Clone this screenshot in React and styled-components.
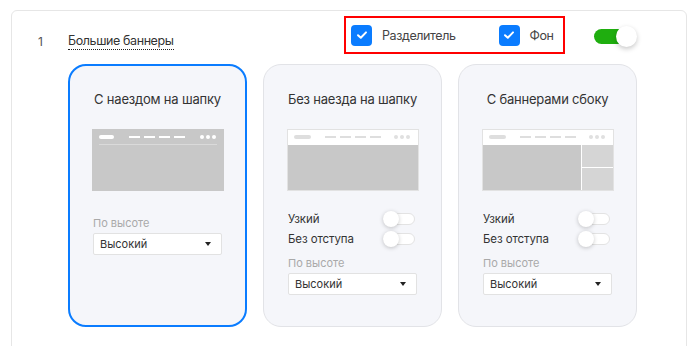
import React from "react";
import styled, { createGlobalStyle } from "styled-components";

const Global = createGlobalStyle`
  html, body { margin: 0; padding: 0; background: #fff; }
  body { font-family: Inter, "Noto Sans", sans-serif; color: #333; overflow: hidden; }
  * { box-sizing: border-box; }
`;

const Panel = styled.div`
  margin: 10px 0 0 11px;
  width: 676px;
  height: 360px;
  border: 1px solid #e6e6e6;
  border-radius: 6px;
  padding: 4px 49px 0 25px;
`;

const Header = styled.div`
  display: flex;
  align-items: flex-start;
  height: 39px;
`;

const Num = styled.div`
  width: 31px;
  font-size: 12px;
  line-height: 16px;
  margin-top: 19px;
  color: #555;
  padding-left: 1px;
`;

const Title = styled.div`
  font-size: 12.5px;
  letter-spacing: -0.4px;
  line-height: 16px;
  margin-top: 18px;
  color: #333;
  border-bottom: 1px dotted #222;
`;

const Highlight = styled.div`
  margin-left: auto;
  margin-top: 1px;
  width: 221px;
  height: 38px;
  border: 2px solid #f00;
  display: flex;
  align-items: center;
  padding-left: 5px;
`;

const CheckItem = styled.label`
  display: flex;
  align-items: center;
  gap: 10px;
  font-size: 12.5px;
  letter-spacing: -0.4px;
  color: #444;
  margin-right: ${(p) => p.$mr || 0}px;
`;

const Box = styled.span`
  width: 21px;
  height: 21px;
  border-radius: 4px;
  background: #0a7cff;
  display: flex;
  align-items: center;
  justify-content: center;
`;

const BigToggle = styled.div`
  position: relative;
  margin-left: 29px;
  margin-top: 11px;
  width: 43px;
  height: 21px;
`;

const BigTrack = styled.div`
  position: absolute;
  left: 0;
  top: 3px;
  width: 38px;
  height: 15px;
  border-radius: 8px;
  background: #1fae0f;
`;

const BigKnob = styled.div`
  position: absolute;
  right: 0;
  top: 0;
  width: 21px;
  height: 21px;
  border-radius: 50%;
  background: #fff;
  box-shadow: 0 2px 5px rgba(0, 0, 0, 0.22);
`;

const Cards = styled.div`
  display: flex;
  gap: 16px;
  margin-top: 10px;
  margin-left: 31px;
`;

const Card = styled.div`
  width: 179px;
  height: 263px;
  border-radius: 18px;
  background: #f5f6fa;
  border: ${(p) => (p.$active ? "2px solid #0a7cff" : "1px solid #e2e3e7")};
  padding: ${(p) => (p.$active ? "24px 22px 0 22px" : "25px 23px 0 23px")};
  display: flex;
  flex-direction: column;
`;

const CardTitle = styled.div`
  text-align: center;
  font-size: 13px;
  letter-spacing: -0.2px;
  line-height: 18px;
  color: #333;
  height: 18px;
  white-space: nowrap;
`;

const Preview = styled.div`
  margin-top: 21px;
  width: 132px;
  height: 62px;
  background: #c8c8c8;
  border: ${(p) => (p.$framed ? "1px solid #e2e2e2" : "none")};
  display: flex;
  flex-direction: column;
`;

const PHeader = styled.div`
  height: ${(p) => (p.$white ? 15 : 16)}px;
  flex-shrink: 0;
  background: ${(p) => (p.$white ? "#fff" : "transparent")};
  border-bottom: 1px solid ${(p) => (p.$white ? "#fff" : "#dadada")};
  margin: ${(p) => (p.$white ? "0" : "0 7px")};
  padding: ${(p) => (p.$white ? "0 8px 0 6px" : "0 1px 0 0")};
  display: flex;
  align-items: center;
`;

const Pill = styled.span`
  width: ${(p) => (p.$white ? 17 : 15)}px;
  height: 4px;
  border-radius: 2px;
  background: ${(p) => (p.$white ? "#dedede" : "#fff")};
`;

const Dashes = styled.span`
  display: flex;
  gap: 4px;
  margin-left: ${(p) => (p.$white ? 14 : 15)}px;
`;

const Dash = styled.span`
  width: 11px;
  height: 2px;
  background: ${(p) => (p.$white ? "#dedede" : "#fff")};
`;

const Dots = styled.span`
  display: flex;
  gap: 2px;
  margin-left: auto;
`;

const Dot = styled.span`
  width: 4px;
  height: 4px;
  border-radius: 50%;
  background: ${(p) => (p.$white ? "#e0e0e0" : "#fff")};
`;

const PBody = styled.div`
  flex: 1;
  display: flex;
`;

const PMain = styled.div`
  flex: 1;
  background: #c8c8c8;
`;

const PSide = styled.div`
  width: 32px;
  border-left: 1px solid #fff;
  display: flex;
  flex-direction: column;
`;

const PSideCell = styled.div`
  flex: 1;
  background: #d5d5d5;
  & + & {
    border-top: 1px solid #fff;
  }
`;

const Options = styled.div`
  margin-top: 18px;
  display: flex;
  flex-direction: column;
`;

const OptRow = styled.div`
  height: 20px;
  display: flex;
  align-items: center;
  justify-content: space-between;
  padding-left: 1px;
  padding-right: 3px;
  font-size: 11.5px;
  letter-spacing: -0.1px;
  color: #333;
`;

const SmallToggle = styled.span`
  position: relative;
  width: 32px;
  height: 12px;
  border-radius: 6px;
  background: #fff;
  border: 1px solid #e3e3e3;
`;

const SmallKnob = styled.span`
  position: absolute;
  left: -1px;
  top: -3px;
  width: 16px;
  height: 16px;
  border-radius: 50%;
  background: #fff;
  box-shadow: 0 1px 4px rgba(0, 0, 0, 0.22);
`;

const FieldLabel = styled.div`
  margin-top: 7px;
  height: 14px;
  line-height: 14px;
  font-size: 11px;
  color: #a9a9a9;
  padding-left: 1px;
`;

const Select = styled.div`
  margin: 3px 0 0 1px;
  width: 129px;
  height: 22px;
  background: #fff;
  border: 1px solid #e2e2e2;
  border-radius: 2px;
  display: flex;
  align-items: center;
  justify-content: space-between;
  padding: 0 10px 0 6px;
  font-size: 11px;
  color: #333;
`;

const Caret = styled.span`
  width: 0;
  height: 0;
  border-left: 3px solid transparent;
  border-right: 3px solid transparent;
  border-top: 4px solid #222;
`;

function Check() {
  return (
    <svg width="12" height="10" viewBox="0 0 12 10">
      <path d="M2 5.2 L4.8 7.8 L10 2.4" fill="none" stroke="#fff" strokeWidth="2" strokeLinecap="round" strokeLinejoin="round" />
    </svg>
  );
}

function PreviewImg({ kind }) {
  const white = kind !== "overlay";
  return (
    <Preview $framed={white}>
      <PHeader $white={white}>
        <Pill $white={white} />
        <Dashes $white={white}>
          {[0, 1, 2, 3].map((i) => (
            <Dash key={i} $white={white} />
          ))}
        </Dashes>
        <Dots>
          {[0, 1, 2].map((i) => (
            <Dot key={i} $white={white} />
          ))}
        </Dots>
      </PHeader>
      <PBody>
        <PMain />
        {kind === "side" && (
          <PSide>
            <PSideCell />
            <PSideCell />
          </PSide>
        )}
      </PBody>
    </Preview>
  );
}

const cards = [
  { title: "С наездом на шапку", kind: "overlay", active: true, toggles: false },
  { title: "Без наезда на шапку", kind: "plain", active: false, toggles: true },
  { title: "С баннерами сбоку", kind: "side", active: false, toggles: true },
];

export default function App() {
  return (
    <>
      <Global />
      <Panel>
        <Header>
          <Num>1</Num>
          <Title>Большие баннеры</Title>
          <Highlight>
            <CheckItem $mr={43}>
              <Box>
                <Check />
              </Box>
              Разделитель
            </CheckItem>
            <CheckItem>
              <Box>
                <Check />
              </Box>
              Фон
            </CheckItem>
          </Highlight>
          <BigToggle>
            <BigTrack />
            <BigKnob />
          </BigToggle>
        </Header>
        <Cards>
          {cards.map((c) => (
            <Card key={c.title} $active={c.active}>
              <CardTitle>{c.title}</CardTitle>
              <PreviewImg kind={c.kind} />
              <Options>
                {c.toggles && (
                  <>
                    <OptRow>
                      Узкий
                      <SmallToggle>
                        <SmallKnob />
                      </SmallToggle>
                    </OptRow>
                    <OptRow>
                      Без отступа
                      <SmallToggle>
                        <SmallKnob />
                      </SmallToggle>
                    </OptRow>
                  </>
                )}
                <FieldLabel>По высоте</FieldLabel>
                <Select>
                  Высокий
                  <Caret />
                </Select>
              </Options>
            </Card>
          ))}
        </Cards>
      </Panel>
    </>
  );
}
